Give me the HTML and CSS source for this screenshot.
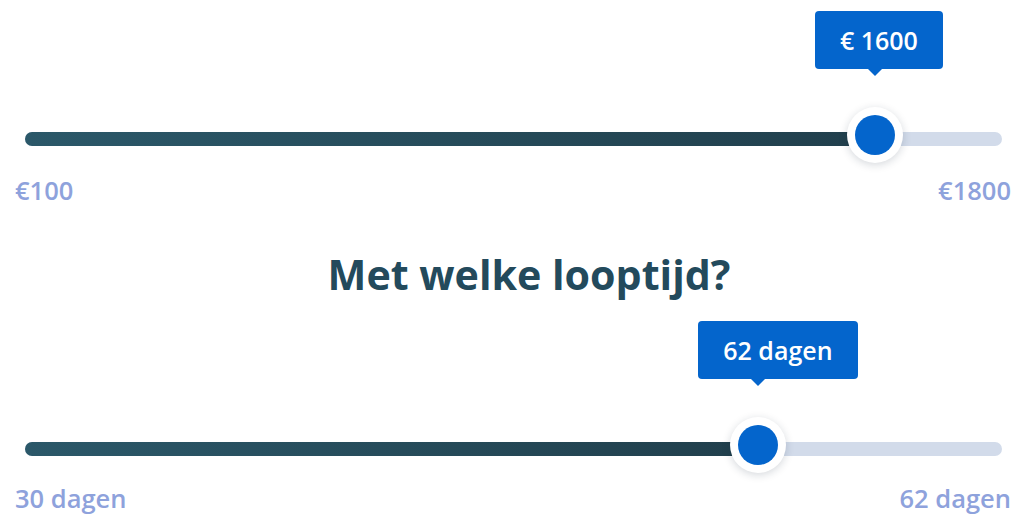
FILE: index.html
```html
<!DOCTYPE html>
<html lang="nl">
<head>
<meta charset="utf-8">
<title>Lening</title>
<link rel="stylesheet" href="styles.css">
</head>
<body>
<div class="page">
  <div class="slider">
    <div class="track">
      <div class="fill" style="width:86.99%"></div>
      <div class="thumb" style="left:86.99%"></div>
      <div class="tip" style="left:86.99%">€ 1600</div>
    </div>
  </div>
  <div class="labels"><span>€100</span><span>€1800</span></div>
  <h2 class="title">Met welke looptijd?</h2>
  <div class="slider second">
    <div class="track">
      <div class="fill" style="width:75.05%"></div>
      <div class="thumb" style="left:75.05%"></div>
      <div class="tip" style="left:75.05%">62 dagen</div>
    </div>
  </div>
  <div class="labels"><span>30 dagen</span><span>62 dagen</span></div>
</div>
</body>
</html>
```
FILE: styles.css
```css
html, body {
  margin: 0;
  padding: 0;
  background: #ffffff;
}
body {
  font-family: "Open Sans", "Noto Sans", sans-serif;
  width: 1024px;
  height: 525px;
  overflow: hidden;
}
.page {
  padding-top: 132px;
}
.slider {
  padding: 0 22px 0 25px;
}
.slider.second {
  margin-top: 144px;
}
.track {
  position: relative;
  height: 14px;
  border-radius: 7px;
  background: #d2dbea;
}
.fill {
  height: 100%;
  border-radius: 7px 0 0 7px;
  background: linear-gradient(to right, #2b5869, #213f4c);
}
.thumb {
  position: absolute;
  top: 50%;
  width: 56px;
  height: 56px;
  margin-top: -4px;
  transform: translate(-50%, -50%);
  border-radius: 50%;
  background: #ffffff;
  box-shadow: 0 2px 8px rgba(20, 40, 60, 0.18);
}
.thumb::after {
  content: "";
  position: absolute;
  left: 8px;
  top: 8px;
  width: 40px;
  height: 40px;
  border-radius: 50%;
  background: #0465cc;
}
.tip {
  position: absolute;
  bottom: 77px;
  transform: translateX(-60px);
  padding: 0 25px;
  height: 58px;
  line-height: 58px;
  border-radius: 4px;
  background: #0465cc;
  color: #ffffff;
  font-size: 25px;
  font-weight: 600;
  white-space: nowrap;
}
.tip::after {
  content: "";
  position: absolute;
  left: 60px;
  top: 100%;
  margin-left: -7px;
  border-left: 7px solid transparent;
  border-right: 7px solid transparent;
  border-top: 7px solid #0465cc;
}
.labels {
  display: flex;
  justify-content: space-between;
  padding: 0 13px 0 15px;
  margin-top: 27px;
  font-size: 25.5px;
  line-height: 34px;
  font-weight: 600;
  color: #8ea2dc;
}
.second + .labels {
  margin-top: 25px;
}
.title {
  margin: 43px 0 0;
  padding-left: 34px;
  text-align: center;
  font-size: 41.2px;
  line-height: 48px;
  font-weight: 700;
  color: #234a5c;
}
```
